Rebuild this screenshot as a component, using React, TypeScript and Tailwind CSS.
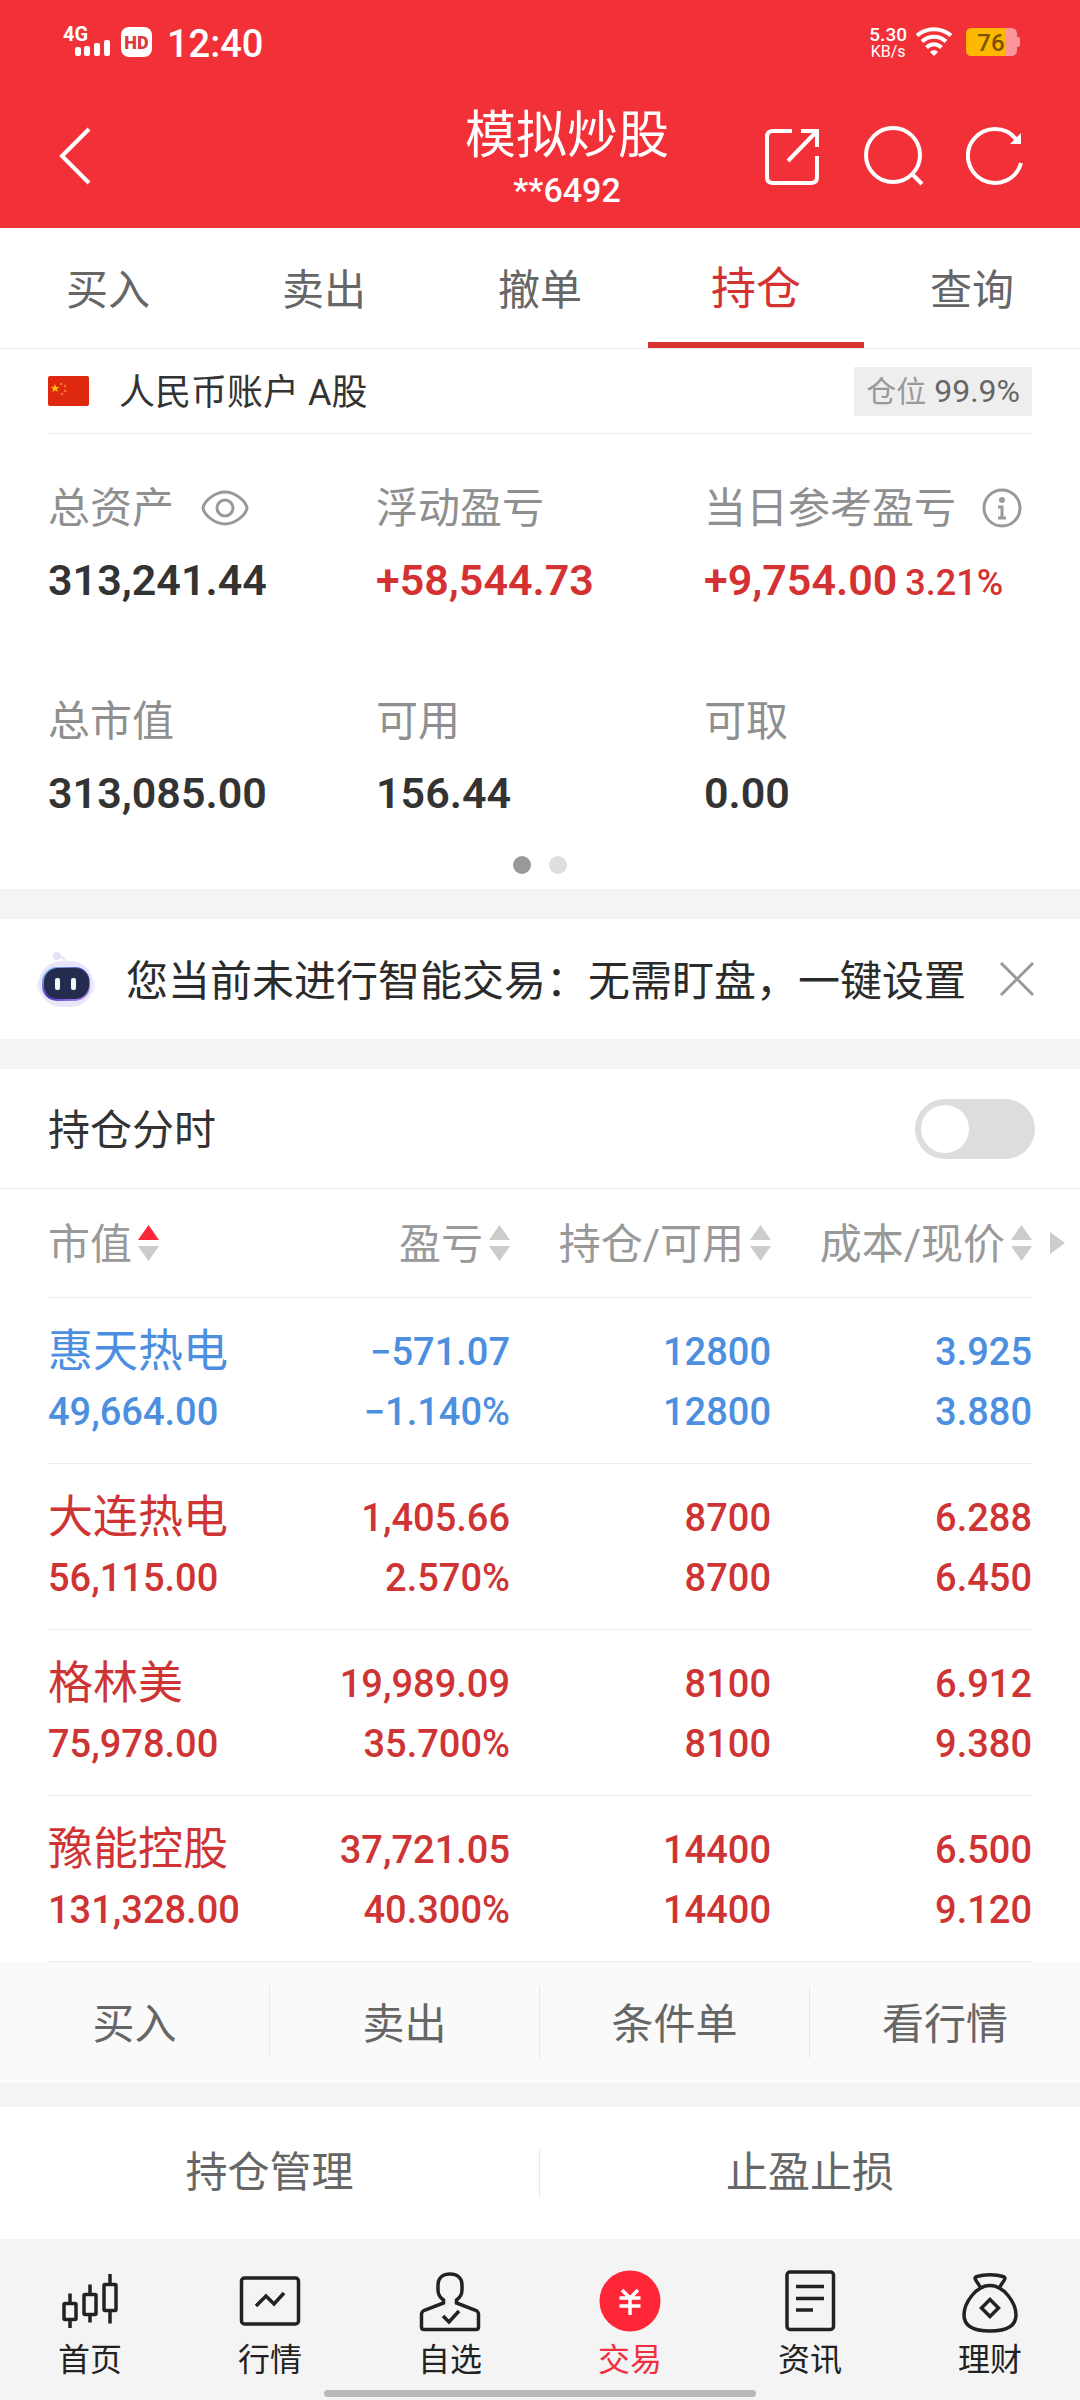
import { useState, type ReactNode } from 'react';
import clsx from 'clsx';

type Holding = {
  name: string;
  marketValue: string;
  profit: string;
  profitRate: string;
  position: string;
  available: string;
  cost: string;
  price: string;
  down?: boolean;
};

const tabs = ['买入', '卖出', '撤单', '持仓', '查询'];

const holdings: Holding[] = [
  { name: '惠天热电', marketValue: '49,664.00', profit: '−571.07', profitRate: '−1.140%', position: '12800', available: '12800', cost: '3.925', price: '3.880', down: true },
  { name: '大连热电', marketValue: '56,115.00', profit: '1,405.66', profitRate: '2.570%', position: '8700', available: '8700', cost: '6.288', price: '6.450' },
  { name: '格林美', marketValue: '75,978.00', profit: '19,989.09', profitRate: '35.700%', position: '8100', available: '8100', cost: '6.912', price: '9.380' },
  { name: '豫能控股', marketValue: '131,328.00', profit: '37,721.05', profitRate: '40.300%', position: '14400', available: '14400', cost: '6.500', price: '9.120' },
];

function StatusBar() {
  return (
    <div className="flex h-[84px] items-center justify-between pl-[60px] pr-[59px]">
      <div className="flex items-center">
        <svg width="54" height="48" viewBox="-2 -6 54 48" className="fill-white" aria-label="4G">
          <text x="1" y="17" fontSize="20" fontWeight="700">4G</text>
          <rect x="13" y="23" width="6" height="9" rx="2" />
          <rect x="22" y="22" width="6" height="10" rx="2" />
          <rect x="32" y="19" width="6" height="13" rx="2" />
          <rect x="42" y="16" width="6" height="16" rx="2" />
        </svg>
        <span className="ml-[7px] flex h-[30px] w-[31px] items-center justify-center rounded-lg bg-white text-[18px] font-black text-[#d93a42]">
          HD
        </span>
        <span className="ml-[15px] mt-1 text-[38px] font-medium leading-none">12:40</span>
      </div>
      <div className="flex items-center">
        <div className="flex flex-col items-center text-[19px] leading-none">
          <span className="font-medium">5.30</span>
          <span className="text-[16px]">KB/s</span>
        </div>
        <svg width="36" height="30" viewBox="0 0 36 30" fill="none" stroke="#fff" strokeWidth="4" className="ml-[9px]">
          <path d="M1 8.500C10.500 0 25.500 0 35 8.500" />
          <path d="M6 14.500C13 8 23 8 30 14.500" />
          <path d="M10.500 20.500C15 16 21 16 25.500 20.500" />
          <path d="M14 25L18 29L22 25C20 22.700 16 22.700 14 25Z" fill="#fff" stroke="none" />
        </svg>
        <svg width="55" height="28" viewBox="0 0 55 28" className="ml-[14px]" aria-label="76%">
          <path d="M6 0H45Q51 0 51 6V9H52Q54 9 54 12V16Q54 19 52 19H51V22Q51 28 45 28H6Q0 28 0 22V6Q0 0 6 0Z" fill="#fb979b" />
          <path d="M6 0H39V28H6Q0 28 0 22V6Q0 0 6 0Z" fill="#ffb800" />
          <text x="25" y="23" textAnchor="middle" fontSize="24" fontWeight="500" fill="#7a5200">76</text>
        </svg>
      </div>
    </div>
  );
}

function TitleBar() {
  return (
    <div className="grid h-36 grid-cols-[1fr_auto_1fr] items-center pl-[56px] pr-[54px]">
      <button type="button" aria-label="返回" className="justify-self-start">
        <svg width="40" height="60" viewBox="0 0 40 60" fill="none" stroke="#fff" strokeWidth="4">
          <path d="M33 3L6 30L33 57" />
        </svg>
      </button>
      <div className="flex flex-col items-center pl-[52px] pt-1">
        <h1 className="text-[51px] leading-[64px]">模拟炒股</h1>
        <p className="text-[34px] font-medium leading-[44px]">**6492</p>
      </div>
      <div className="flex items-center gap-[42px] justify-self-end">
        <button type="button" aria-label="分享">
          <svg width="60" height="60" viewBox="0 0 60 60" fill="none" stroke="#fff" strokeWidth="4">
            <path d="M30 5H11Q5 5 5 11V51Q5 57 11 57H49Q55 57 55 51V30" />
            <path d="M39 5H55V21M55 5L26 35" />
          </svg>
        </button>
        <button type="button" aria-label="搜索">
          <svg width="60" height="60" viewBox="0 0 60 60" fill="none" stroke="#fff" strokeWidth="4">
            <circle cx="29" cy="29" r="27" />
            <path d="M48 48L58 58" />
          </svg>
        </button>
        <button type="button" aria-label="刷新">
          <svg width="60" height="60" viewBox="0 0 60 60" fill="none" stroke="#fff" strokeWidth="4">
            <path d="M55 37A27 27 0 1 1 50 13" />
            <path d="M55 7V18H44Z" fill="#fff" stroke="none" />
          </svg>
        </button>
      </div>
    </div>
  );
}

function AccountRow() {
  return (
    <div className="mx-12 flex h-[85px] items-center border-b border-[#ededed]">
      <svg width="41" height="30" viewBox="0 0 41 30" aria-label="中国">
        <rect width="41" height="30" rx="2" fill="#de2910" />
        <path d="M7 8L8.200 11H11.300L8.800 12.900L9.800 16L7 14.200L4.200 16L5.200 12.900L2.700 11H5.800Z" fill="#ffc400" />
        <g fill="#f5742a">
          <circle cx="13" cy="8" r="1.300" />
          <circle cx="17" cy="10" r="1.300" />
          <circle cx="17" cy="15" r="1.300" />
          <circle cx="14" cy="18" r="1.300" />
        </g>
      </svg>
      <span className="ml-[30px] pt-1 text-[36px] text-[#333]">人民币账户 A股</span>
      <span className="ml-auto flex items-baseline gap-2 bg-[#eee] px-3 text-[32px] leading-[48px] text-[#666]">
        <span className="text-[30px] text-[#999]">仓位</span>
        99.9%
      </span>
    </div>
  );
}

function Stat({ label, value, extra, icon, up }: { label: string; value: string; extra?: string; icon?: ReactNode; up?: boolean }) {
  return (
    <div>
      <dt className="flex h-[60px] items-center whitespace-nowrap pt-1 text-[42px] text-[#8f8f8f]">
        {label}
        {icon}
      </dt>
      <dd className={clsx('mt-3 flex h-[62px] items-baseline whitespace-nowrap text-[43px] font-semibold', up ? 'text-[#d43232]' : 'text-[#333]')}>
        {value}
        {extra && <span className="ml-2 text-[36px] font-medium">{extra}</span>}
      </dd>
    </div>
  );
}

function AssetSummary() {
  return (
    <section className="pb-[15px]">
      <dl className="grid grid-cols-3 gap-y-[79px] px-12 pt-[42px]">
        <Stat
          label="总资产"
          value="313,241.44"
          icon={
            <button type="button" aria-label="显示或隐藏金额" className="ml-[27px]">
              <svg width="48" height="36" viewBox="0 0 48 36" fill="none" stroke="#999" strokeWidth="3">
                <path d="M2 18C3 11 14 2 24 2S45 11 46 18C45 25 34 34 24 34S3 25 2 18Z" />
                <circle cx="24" cy="18" r="8" />
              </svg>
            </button>
          }
        />
        <Stat label="浮动盈亏" value="+58,544.73" up />
        <Stat
          label="当日参考盈亏"
          value="+9,754.00"
          extra="3.21%"
          up
          icon={
            <button type="button" aria-label="说明" className="ml-[26px]">
              <svg width="40" height="40" viewBox="0 0 40 40" fill="none" stroke="#999" strokeWidth="3">
                <circle cx="20" cy="20" r="18" />
                <circle cx="20" cy="12" r="3" fill="#999" stroke="none" />
                <path d="M16 19H20V30M16 30H24" />
              </svg>
            </button>
          }
        />
        <Stat label="总市值" value="313,085.00" />
        <Stat label="可用" value="156.44" />
        <Stat label="可取" value="0.00" />
      </dl>
      <div className="mt-[33px] flex justify-center gap-[18px]">
        <span className="size-[18px] rounded-full bg-[#999]" />
        <span className="size-[18px] rounded-full bg-[#dedede]" />
      </div>
    </section>
  );
}

function Robot() {
  return (
    <svg width="62" height="58" viewBox="0 0 62 58" className="shrink-0">
      <defs>
        <linearGradient id="rim" x1="0" y1="0" x2="1" y2="1">
          <stop offset="0" stopColor="#8fdcff" />
          <stop offset="0.5" stopColor="#4a35b8" />
          <stop offset="1" stopColor="#c09cff" />
        </linearGradient>
      </defs>
      <path d="M29 14Q29 6 21 6" fill="none" stroke="#eceaf8" strokeWidth="3" />
      <circle cx="21" cy="6" r="4" fill="#e4e2f5" />
      <rect x="1" y="28" width="58" height="16" rx="6" fill="#f0eefa" />
      <rect x="3" y="11" width="54" height="46" rx="22" fill="#eae6f9" />
      <rect x="6" y="17" width="48" height="34" rx="15" fill="url(#rim)" />
      <rect x="8" y="18" width="45" height="31" rx="14" fill="#252b4c" />
      <rect x="19" y="28" width="5" height="12" rx="2" fill="#e6fff8" />
      <rect x="35" y="28" width="5" height="12" rx="2" fill="#e6fff8" />
    </svg>
  );
}

function SmartTradeBanner({ onClose }: { onClose: () => void }) {
  return (
    <section className="flex h-[120px] items-center bg-white pl-[36px] pr-[44px]">
      <Robot />
      <p className="ml-[28px] whitespace-nowrap pt-1 text-[42px] text-[#2b2b2b]">您当前未进行智能交易：无需盯盘，一键设置</p>
      <button type="button" aria-label="关闭" onClick={onClose} className="ml-auto">
        <svg width="38" height="38" viewBox="0 0 38 38" fill="none" stroke="#999" strokeWidth="3">
          <path d="M3 3L35 35M35 3L3 35" />
        </svg>
      </button>
    </section>
  );
}

function SortHeader({ label, active, className }: { label: string; active?: boolean; className?: string }) {
  return (
    <th scope="col" className={clsx('h-[108px] p-0 font-normal', className)}>
      <button type="button" className="inline-flex items-center gap-1.5 whitespace-nowrap align-middle">
        {label}
        <svg width="21" height="38" viewBox="0 0 21 38" fill="#ccc">
          <path d="M0 15L10.500 0L21 15Z" fill={active ? '#fd2738' : '#ccc'} />
          <path d="M0 21H21L10.500 36Z" />
        </svg>
      </button>
    </th>
  );
}

function HoldingsTable() {
  return (
    <div className="relative px-12">
      <table className="w-full table-fixed border-collapse">
        <thead>
          <tr className="border-b border-[#ededed] text-[42px] text-[#999]">
            <SortHeader label="市值" active className="w-[201px] text-left" />
            <SortHeader label="盈亏" className="text-right" />
            <SortHeader label="持仓/可用" className="text-right" />
            <SortHeader label="成本/现价" className="text-right" />
          </tr>
        </thead>
        <tbody>
          {holdings.map((h) => (
            <tr
              key={h.name}
              className={clsx(
                'h-[166px] border-b border-[#ededed] text-right text-[38px] font-medium leading-[60px]',
                h.down ? 'text-[#4c8fe0]' : 'text-[#cf3434]',
              )}
            >
              <td className="whitespace-nowrap p-0 pt-1 text-left">
                <div className="text-[45px] font-normal">{h.name}</div>
                <div>{h.marketValue}</div>
              </td>
              <td className="p-0 pt-1">
                <div>{h.profit}</div>
                <div>{h.profitRate}</div>
              </td>
              <td className="p-0 pt-1">
                <div>{h.position}</div>
                <div>{h.available}</div>
              </td>
              <td className="p-0 pt-1">
                <div>{h.cost}</div>
                <div>{h.price}</div>
              </td>
            </tr>
          ))}
        </tbody>
      </table>
      <button type="button" aria-label="更多列" className="absolute right-[15px] top-[43px]">
        <svg width="15" height="22" viewBox="0 0 15 22" fill="#ccc">
          <path d="M0 0L15 11L0 22Z" />
        </svg>
      </button>
    </div>
  );
}

const navItems: { label: string; active?: boolean; icon: ReactNode }[] = [
  {
    label: '首页',
    icon: (
      <>
        <rect x="6" y="33.500" width="12" height="16" rx="1" />
        <path d="M12 23.500V33M12 50V58" />
        <rect x="26" y="24.500" width="12" height="20" rx="1" />
        <path d="M32 14.500V24M32 45V52.500" />
        <rect x="46" y="14.500" width="12" height="26" rx="1" />
        <path d="M52 4V14M52 41V53.500" />
      </>
    ),
  },
  {
    label: '行情',
    icon: (
      <>
        <rect x="3.500" y="8" width="57" height="46" rx="3" />
        <path d="M18 36L28 26L36 34L46 23" />
      </>
    ),
  },
  {
    label: '自选',
    icon: (
      <>
        <path d="M25.500 33V30C21 27 20 24 20 20V15C20 8 25 4 32 4S44 8 44 15V20C44 24 43 27 38.500 30V33L57 40Q60.500 41.500 60.500 44V57Q60.500 59.500 58 59.500H6Q3.500 59.500 3.500 57V44Q3.500 41.500 7 40Z" />
        <path d="M25 46L31 52L41 41" />
      </>
    ),
  },
  {
    label: '交易',
    active: true,
    icon: (
      <>
        <circle cx="32" cy="31" r="30.500" fill="#ff2638" stroke="none" />
        <path d="M24 20L32 28L40 20M32 28V45M21.500 28H42.500M21.500 36H42.500" stroke="#fff" />
      </>
    ),
  },
  {
    label: '资讯',
    icon: (
      <>
        <rect x="9" y="2" width="46.500" height="57.500" rx="3" />
        <path d="M18 16.500H46M18 28.500H46M18 40H35" />
      </>
    ),
  },
  {
    label: '理财',
    icon: (
      <>
        <path d="M22 17C20 12 14 8 19 6.500C26 4 38 4 45 6.500C50 8 44 12 42 17" />
        <path d="M32 15.500C18 15.500 6 33 6 45C6 57 16 61 32 61S58 57 58 45C58 33 46 15.500 32 15.500Z" />
        <path d="M32 29.500L40.500 38L32 46.500L23.500 38Z" />
      </>
    ),
  },
];

function BottomNav() {
  return (
    <nav className="relative grid h-[161px] grid-cols-6 bg-[#f4f4f4] pt-[31px]">
      {navItems.map((item) => (
        <a
          key={item.label}
          href="#"
          aria-current={item.active ? 'page' : undefined}
          className={clsx('flex flex-col items-center', item.active ? 'text-[#ee3040]' : 'text-[#222]')}
        >
          <svg width="64" height="64" viewBox="0 0 64 64" fill="none" stroke="#222" strokeWidth="3.500">
            {item.icon}
          </svg>
          <span className="pt-0.5 text-[32px] leading-[48px]">{item.label}</span>
        </a>
      ))}
      <span className="absolute bottom-[3px] left-1/2 h-[7px] w-2/5 -translate-x-1/2 rounded-full bg-[#b9b9b9]" />
    </nav>
  );
}

export default function App() {
  const [tab, setTab] = useState('持仓');
  const [bannerOpen, setBannerOpen] = useState(true);

  return (
    <div className="min-h-screen bg-white font-[Roboto,'Noto_Sans_CJK_SC',sans-serif]">
      <header className="bg-[#f23038] text-white">
        <StatusBar />
        <TitleBar />
      </header>

      <div className="grid h-[121px] grid-cols-5 border-b border-[#ededed]">
        {tabs.map((t) => (
          <button
            key={t}
            type="button"
            onClick={() => setTab(t)}
            className={clsx(
              'border-b-[6px] pt-2.5',
              t === tab ? 'border-[#dc3131] text-[45px] text-[#d43232]' : 'border-transparent text-[42px] text-[#666]',
            )}
          >
            {t}
          </button>
        ))}
      </div>

      <AccountRow />
      <AssetSummary />
      <div className="h-[30px] bg-[#f4f4f4]" />
      {bannerOpen && (
        <>
          <SmartTradeBanner onClose={() => setBannerOpen(false)} />
          <div className="h-[30px] bg-[#f4f4f4]" />
        </>
      )}

      <label className="flex h-[120px] items-center justify-between border-b border-[#ededed] pl-12 pr-[45px] text-[42px] text-[#333]">
        <span className="pt-1">持仓分时</span>
        <input
          type="checkbox"
          role="switch"
          className="flex h-[60px] w-[120px] appearance-none items-center rounded-full bg-[#ddd] px-[6px] before:size-12 before:rounded-full before:bg-white checked:justify-end checked:bg-[#dc3131]"
        />
      </label>
      <HoldingsTable />

      <div className="grid h-[121px] grid-cols-4 items-center divide-x divide-[#e8e8e8] bg-[#fafafa] text-[42px] text-[#666]">
        {['买入', '卖出', '条件单', '看行情'].map((action) => (
          <button key={action} type="button" className="h-[72px] pt-1">
            {action}
          </button>
        ))}
      </div>
      <div className="h-6 bg-[#f4f4f4]" />
      <div className="grid h-[132px] grid-cols-2 items-center divide-x divide-[#e8e8e8] text-[42px] leading-[48px] text-[#666]">
        <button type="button" className="h-12">持仓管理</button>
        <button type="button" className="h-12">止盈止损</button>
      </div>
      <BottomNav />
    </div>
  );
}
